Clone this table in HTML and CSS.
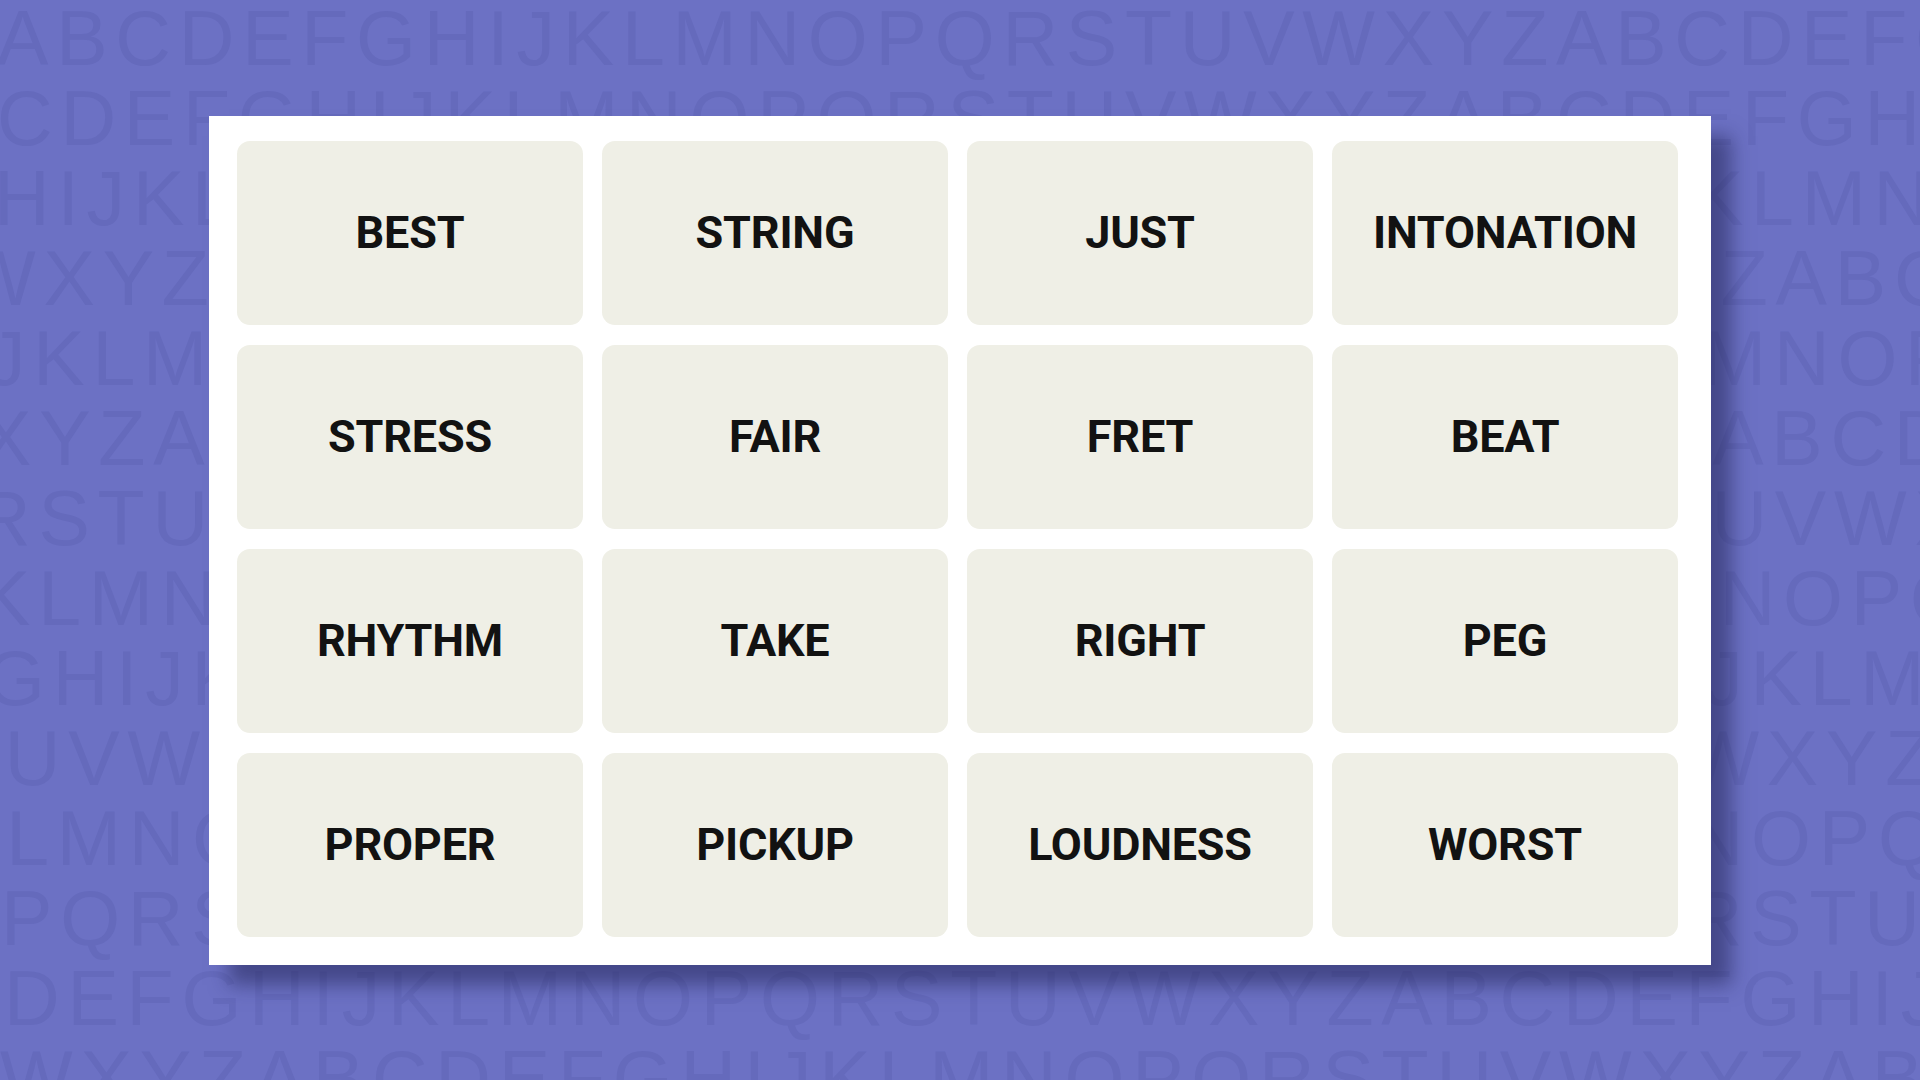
FILE: index.html
```html
<!DOCTYPE html>
<html lang="en">
<head>
<meta charset="utf-8">
<title>Connections</title>
<link rel="stylesheet" href="styles.css">
</head>
<body>
<div class="letters" aria-hidden="true">
  <div class="row r1">ABCDEFGHIJKLMNOPQRSTUVWXYZABCDEFGHIJ</div>
  <div class="row r2">CDEFGHIJKLMNOPQRSTUVWXYZABCDEFGHIJKL</div>
  <div class="row r3">HIJKLMNOPQRSTUVWXYZABCDEFGHIJKLMNOPQ</div>
  <div class="row r4">WXYZABCDEFGHIJKLMNOPQRSTUVWXYZABCDEF</div>
  <div class="row r5">JKLMNOPQRSTUVWXYZABCDEFGHIJKLMNOPQRS</div>
  <div class="row r6">XYZABCDEFGHIJKLMNOPQRSTUVWXYZABCDEFG</div>
  <div class="row r7">RSTUVWXYZABCDEFGHIJKLMNOPQRSTUVWXYZA</div>
  <div class="row r8">KLMNOPQRSTUVWXYZABCDEFGHIJKLMNOPQRST</div>
  <div class="row r9">GHIJKLMNOPQRSTUVWXYZABCDEFGHIJKLMNOP</div>
  <div class="row r10">TUVWXYZABCDEFGHIJKLMNOPQRSTUVWXYZABC</div>
  <div class="row r11">KLMNOPQRSTUVWXYZABCDEFGHIJKLMNOPQRST</div>
  <div class="row r12">PQRSTUVWXYZABCDEFGHIJKLMNOPQRSTUVWXY</div>
  <div class="row r13">DEFGHIJKLMNOPQRSTUVWXYZABCDEFGHIJKLM</div>
  <div class="row r14">WXYZABCDEFGHIJKLMNOPQRSTUVWXYZABCDEF</div>
</div>
<main class="board">
  <div class="grid">
    <div class="tile">BEST</div>
    <div class="tile">STRING</div>
    <div class="tile">JUST</div>
    <div class="tile">INTONATION</div>
    <div class="tile">STRESS</div>
    <div class="tile">FAIR</div>
    <div class="tile">FRET</div>
    <div class="tile">BEAT</div>
    <div class="tile">RHYTHM</div>
    <div class="tile">TAKE</div>
    <div class="tile">RIGHT</div>
    <div class="tile">PEG</div>
    <div class="tile">PROPER</div>
    <div class="tile">PICKUP</div>
    <div class="tile">LOUDNESS</div>
    <div class="tile">WORST</div>
  </div>
</main>
</body>
</html>
```

FILE: styles.css
```css
html, body {
  margin: 0;
  padding: 0;
}

body {
  width: 1920px;
  height: 1080px;
  overflow: hidden;
  background: #6c71c4;
  display: flex;
  align-items: center;
  justify-content: center;
  position: relative;
}

.letters {
  position: absolute;
  inset: 0;
  overflow: hidden;
  margin-top: -2px;
  font-family: "Liberation Sans", Arial, sans-serif;
  font-size: 77px;
  line-height: 80px;
  letter-spacing: 7.8px;
  color: #656abc;
  z-index: 0;
}

.row {
  white-space: nowrap;
}

.r1 { margin-left: -3px; }
.r2 { margin-left: -3px; }
.r3 { margin-left: -6px; }
.r4 { margin-left: -37px; }
.r5 { margin-left: -13px; }
.r6 { margin-left: -20px; }
.r7 { margin-left: -25px; }
.r8 { margin-left: -21px; }
.r9 { margin-left: -15px; }
.r10 { margin-left: -50px; }
.r11 { margin-left: -53px; }
.r12 { margin-left: 1px; }
.r13 { margin-left: 4px; }
.r14 { margin-left: 0px; }

.board {
  position: relative;
  z-index: 1;
  width: 1502px;
  height: 849px;
  box-sizing: border-box;
  padding: 25px 32px 28px 28px;
  background: #ffffff;
  box-shadow: 20px 20px 18px rgba(30, 32, 80, 0.5);
}

.grid {
  display: grid;
  grid-template-columns: repeat(4, 346px);
  grid-template-rows: repeat(4, 184px);
  column-gap: 19px;
  row-gap: 20px;
}

.tile {
  background: #efefe6;
  border-radius: 13px;
  display: flex;
  align-items: center;
  justify-content: center;
  font-family: Roboto, "Liberation Sans", sans-serif;
  font-weight: 700;
  font-size: 45px;
  color: #121212;
  letter-spacing: -0.2px;
}
```
